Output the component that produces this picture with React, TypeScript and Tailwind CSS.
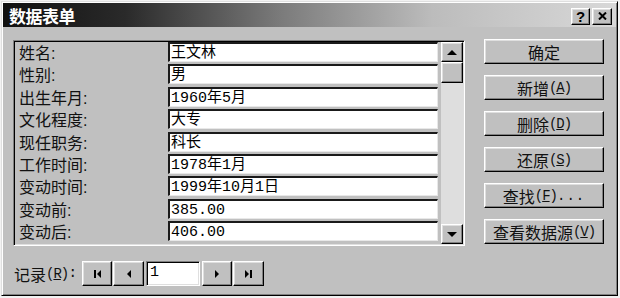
import React from "react";

const raised =
  "bg-[#c0c0c0] border border-t-white border-l-white border-r-black border-b-black shadow-[inset_-1px_-1px_0_#808080,inset_1px_1px_0_#dfdfdf]";
const sunken =
  "border border-t-[#808080] border-l-[#808080] border-r-white border-b-white shadow-[inset_1px_1px_0_#000,inset_-1px_-1px_0_#dfdfdf]";

const rows: [string, string][] = [
  ["姓名:", "王文林"],
  ["性别:", "男"],
  ["出生年月:", "1960年5月"],
  ["文化程度:", "大专"],
  ["现任职务:", "科长"],
  ["工作时间:", "1978年1月"],
  ["变动时间:", "1999年10月1日"],
  ["变动前:", "385.00"],
  ["变动后:", "406.00"],
];

const buttons: [string, string | null][] = [
  ["确定", null],
  ["新增", "A"],
  ["删除", "D"],
  ["还原", "S"],
  ["查找", "F"],
  ["查看数据源", "V"],
];

const Tri = ({ dir }: { dir: "up" | "down" | "left" | "right" }) => {
  const pts =
    dir === "up"
      ? "0,5 5,0 10,5"
      : dir === "down"
      ? "0,0 10,0 5,5"
      : dir === "left"
      ? "4,0 4,8 0,4"
      : "0,0 0,8 4,4";
  const w = dir === "up" || dir === "down" ? 10 : 4;
  const h = dir === "up" || dir === "down" ? 5 : 8;
  return (
    <svg width={w} height={h} viewBox={`0 0 ${w} ${h}`}>
      <polygon points={pts} fill="#000" />
    </svg>
  );
};

const First = () => (
  <svg width="7" height="8" viewBox="0 0 7 8">
    <rect x="0" y="0" width="2" height="8" fill="#000" />
    <polygon points="7,0 7,8 3,4" fill="#000" />
  </svg>
);
const Last = () => (
  <svg width="7" height="8" viewBox="0 0 7 8">
    <polygon points="0,0 0,8 4,4" fill="#000" />
    <rect x="5" y="0" width="2" height="8" fill="#000" />
  </svg>
);

export default function App() {
  return (
    <div className="w-[620px] h-[298px] bg-[#f2f2f2] pt-[1px] pl-[1px] overflow-hidden font-['Liberation_Mono','Noto_Sans_CJK_SC',monospace] text-black">
      <div className="w-[617px] h-[295px] bg-[#c0c0c0] p-[1px] border border-t-[#dfdfdf] border-l-[#dfdfdf] border-r-black border-b-black shadow-[inset_1px_1px_0_#fff,inset_-1px_-1px_0_#808080]">
        {/* Title bar */}
        <div className="h-[24px] flex items-center justify-between bg-[linear-gradient(to_right,#101010,#2a2a2a_20%,#7a7a7a_45%,#bcbcbc_70%,#d8d8d8)] pl-[6px] pr-[4px]">
          <span className="text-white font-bold text-[17px] leading-none tracking-[-0.5px] font-['Noto_Sans_CJK_SC',sans-serif]">
            数据表单
          </span>
          <div className="flex gap-[2px] mt-[2px]">
            <div className={`${raised} w-[19px] h-[17px] flex items-center justify-center`}>
              <span className="text-[15px] font-bold leading-none font-['Liberation_Sans',sans-serif]">?</span>
            </div>
            <div className={`${raised} w-[20px] h-[17px] flex items-center justify-center`}>
              <svg width="9" height="8" viewBox="0 0 9 8">
                <path d="M1 0.5 L8 7.5 M8 0.5 L1 7.5" stroke="#000" strokeWidth="2" />
              </svg>
            </div>
          </div>
        </div>

        {/* Content */}
        <div className="pl-[10px] pt-[13px]">
          <div className="flex">
            {/* Frame */}
            <div className={`${sunken} w-[452px] h-[206px] p-[1px] flex`}>
              <div className="w-[426px] flex flex-col">
                {rows.map(([label, value]) => (
                  <div key={label} className="h-[22.4px] flex items-start">
                    <div className="w-[153px] pl-[4px] h-[20px] pt-[4px] flex items-center text-[16px] leading-none font-['Liberation_Sans','Noto_Sans_CJK_SC',sans-serif] text-[#111]">
                      {label}
                    </div>
                    <div className="w-[270px] h-[20px] bg-white border-t-[2px] border-l-[2px] border-t-[#1a1a1a] border-l-[#1a1a1a] border-b border-r border-b-[#e8e8e8] border-r-[#e8e8e8] flex items-center pl-[1px] pt-[2px] text-[15px] leading-none whitespace-nowrap">
                      {value}
                    </div>
                  </div>
                ))}
              </div>
              {/* Scrollbar */}
              <div className="w-[22px] flex flex-col bg-[#dedede]">
                <div className={`${raised} h-[20px] flex items-center justify-center`}>
                  <Tri dir="up" />
                </div>
                <div className={`${raised} h-[21px]`} />
                <div className="flex-1" />
                <div className={`${raised} h-[20px] flex items-center justify-center`}>
                  <Tri dir="down" />
                </div>
              </div>
            </div>

            {/* Buttons */}
            <div className="ml-[19px] -mt-[1px] w-[120px] flex flex-col gap-[11px]">
              {buttons.map(([t, k]) => (
                <div
                  key={t}
                  className={`${raised} h-[25px] flex items-center justify-center pt-[1px] text-[15px] leading-none text-[#111] font-['Liberation_Mono','Noto_Sans_CJK_SC',monospace]`}
                >
                  <span className="font-['Noto_Sans_CJK_SC',sans-serif] text-[16px]">{t}</span>
                  {k && (
                    <span className="text-[14px] tracking-[-1px]">
                      (<span className="underline">{k}</span>)
                    </span>
                  )}
                  {k === "F" && <span className="text-[14px] tracking-[1px]">...</span>}
                </div>
              ))}
            </div>
          </div>

          {/* Record navigation */}
          <div className="mt-[15px] flex items-center h-[25px]">
            <div className="w-[69px] pl-[1px] text-[15px] leading-none whitespace-nowrap text-[#111] flex items-center">
              <span className="font-['Noto_Sans_CJK_SC',sans-serif] text-[16px]">记录</span>
              <span className="text-[14px] tracking-[-1px]">
                (<span className="underline">R</span>)
              </span>
              <span>:</span>
            </div>
            <div className={`${raised} w-[30px] h-[25px] flex items-center justify-center`}>
              <First />
            </div>
            <div className={`${raised} ml-[1px] w-[31px] h-[25px] flex items-center justify-center`}>
              <Tri dir="left" />
            </div>
            <div className={`${sunken} ml-[2px] w-[54px] h-[25px] bg-white flex items-start pl-[3px] pt-[3px] text-[15px] leading-none`}>
              1
            </div>
            <div className={`${raised} ml-[2px] w-[30px] h-[25px] flex items-center justify-center`}>
              <Tri dir="right" />
            </div>
            <div className={`${raised} ml-[1px] w-[31px] h-[25px] flex items-center justify-center`}>
              <Last />
            </div>
          </div>
        </div>
      </div>
    </div>
  );
}
